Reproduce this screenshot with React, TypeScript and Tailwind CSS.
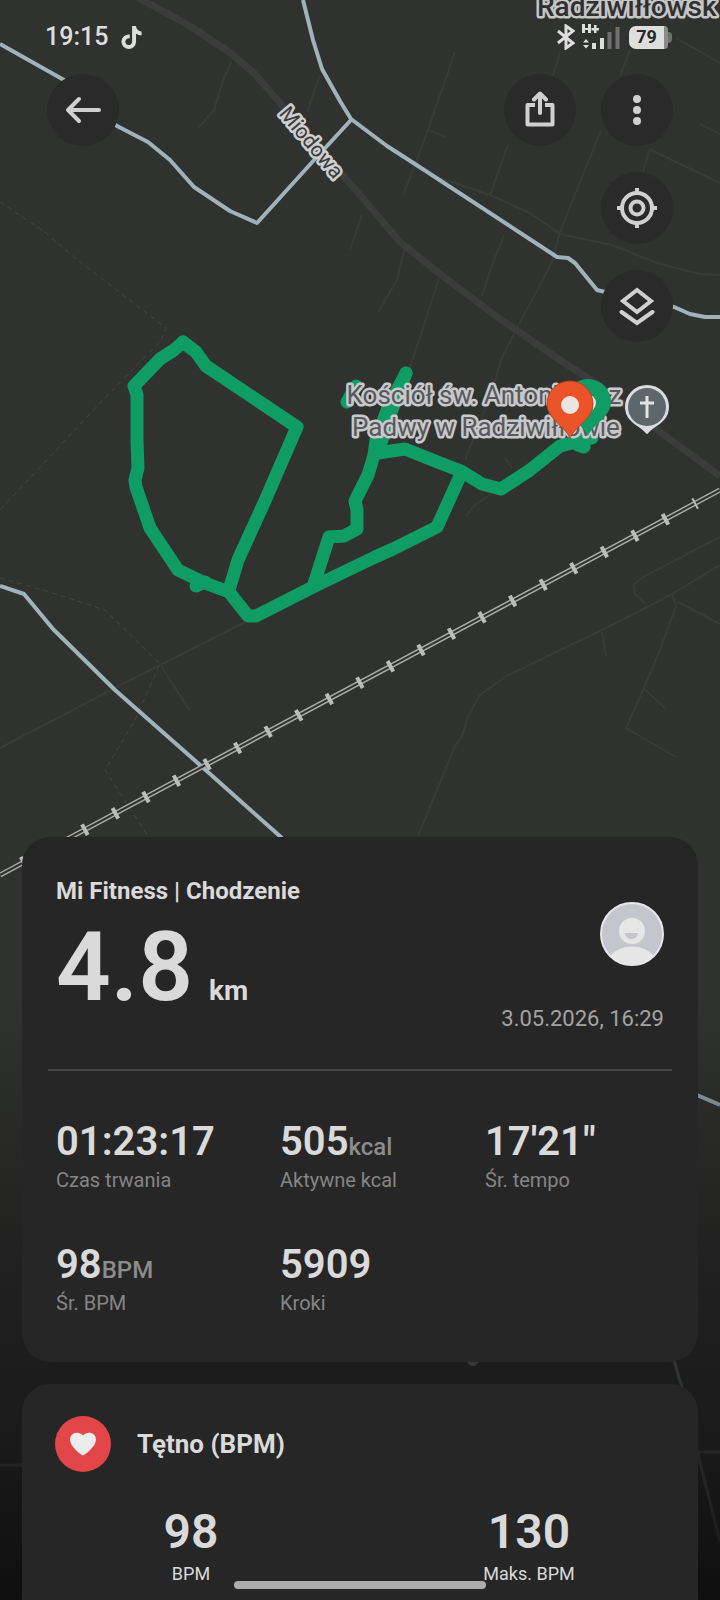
import type { ReactNode } from 'react';
import { FaTiktok } from 'react-icons/fa6';

type Stat = { label: string; value: string; unit?: string };

const stats: Stat[] = [
  { label: 'Czas trwania', value: '01:23:17' },
  { label: 'Aktywne kcal', value: '505', unit: 'kcal' },
  { label: 'Śr. tempo', value: '17\'21"' },
  { label: 'Śr. BPM', value: '98', unit: 'BPM' },
  { label: 'Kroki', value: '5909' },
];

const heartRate: Stat[] = [
  { label: 'BPM', value: '98' },
  { label: 'Maks. BPM', value: '130' },
];

const sideRoads = [
  'M231 62L224 78L214 110L199 127',
  'M320 75L307 112',
  'M455 52L428 130L415 165L403 195M428 130L446 137',
  'M560 52L553 76M508 145L490 195',
  'M630 50L620 76M601 130L560 232L552 262L503 355L485 410L465 460',
  'M415 165L440 178L490 195L530 213L560 234L612 245L660 264L700 274L720 275',
  'M362 215L350 250',
  'M405 247L397 280L378 312',
  'M504 235L492 265L482 296',
  'M440 275L425 322L409 370',
  'M676 38L720 63M700 124L720 134M649 149L720 183M649 151L643 172',
  'M505 458L512 468M491 494L475 505L466 516',
  'M0 748L115 688L245 622',
  'M160 664L190 711',
  'M720 565L672 594L645 608L602 630L560 650L505 677L480 695L468 716L462 736L455 746L418 836',
  'M720 537L645 576L634 584L635 594L645 603',
  'M602 632L606 656',
  'M672 594L676 606L660 650L643 690L626 728L676 757M643 688L665 708M678 602L720 624',
];

const dashedPaths = [
  'M0 202L45 232L75 258L166 328L160 342L100 403L0 510',
  'M0 578L50 592L105 610L160 664L135 720L105 770L148 836',
];

const rivers = [
  'M0 44L64 80L117 126L148 142L170 160L194 187L230 211L257 223L315 159L351 120',
  'M303 0L313 40L322 69L340 101L351 119L387 146L415 164L557 257L568 258L575 263L597 290L637 300L674 307L690 314L705 317H720',
  'M0 586L24 594L53 629L115 690L200 765L282 838',
  'M690 1092L720 1105',
];

const track = [
  'M183 342L196 352L206 366L297 427L264 503L238 560L229 590',
  'M183 342L174 350L160 359L134 386L137 395V440L138 468L135 480L136 487L150 528L178 570L205 583L229 592L248 616H256L315 586L375 557L393 549L437 527L461 474',
  'M196 586L205 582',
  'M314 584L329 537L344 536L357 529V510L355 501L368 475L374 455L376 440L388 408L406 373',
  'M380 446L392 410L406 373',
  'M356 386L347 402',
  'M378 453L405 449L440 463L461 471L482 484L501 489L530 470L560 446L592 438M578 445L584 447',
];

const PIN = 'M0 33C-5 21 -23 14 -23 -1A23 23 0 1 1 23 -1C23 14 5 21 0 33Z';

function RouteMap() {
  return (
    <svg viewBox="0 0 720 1600" className="absolute inset-x-0 top-0 w-full" role="img" aria-label="Mapa trasy">
      <defs>
        <linearGradient id="fade" x1="0" y1="0" x2="0" y2="1">
          <stop offset="0" stopColor="#181818" stopOpacity="0" />
          <stop offset="0.25" stopColor="#1a1a18" stopOpacity="0.4" />
          <stop offset="0.45" stopColor="#1a1a1a" stopOpacity="0.75" />
          <stop offset="0.7" stopColor="#171717" stopOpacity="0.86" />
          <stop offset="1" stopColor="#0d0d0d" stopOpacity="0.95" />
        </linearGradient>
      </defs>
      <rect width="720" height="1600" fill="#303230" />

      <g fill="none" strokeLinejoin="round">
        <g stroke="#3a3b39" strokeWidth="2">
          {sideRoads.map((d) => <path key={d} d={d} />)}
        </g>
        <g stroke="#454643" strokeWidth="1" strokeDasharray="5 4">
          {dashedPaths.map((d) => <path key={d} d={d} />)}
        </g>
        <path
          d="M135 -4L190 26L232 54L255 74L280 103L345 178L360 195L400 242L440 274L500 319L560 360L600 386L660 432L720 476"
          stroke="#3d3c3d"
          strokeWidth="7"
        />
        <g stroke="#a0b3ba" strokeWidth="4">
          {rivers.map((d) => <path key={d} d={d} />)}
        </g>
        <path d="M674 1360L682 1388L698 1454L720 1542" stroke="#a0b3ba" strokeWidth="3" />
        <path d="M0 1465H24M698 1452H720" stroke="#999" strokeWidth="3" />
        <path d="M469 1361Q473 1367 477 1361" stroke="#c6c6c6" strokeWidth="4" />

        {/* railway: two rails with sleepers */}
        <path d="M720 490L0 875" stroke="#a9aaa8" strokeWidth="5" />
        <path d="M720 490L0 875" stroke="#303230" strokeWidth="2" />
        <path d="M696 503L0 875" stroke="#bcbdbb" strokeWidth="12" strokeDasharray="4 30.65" strokeDashoffset="2" />

        <g stroke="#109c65" strokeWidth="13" strokeLinecap="round">
          {track.map((d) => <path key={d} d={d} />)}
        </g>
      </g>

      <g
        fontFamily="Roboto, sans-serif"
        strokeLinejoin="round"
        textAnchor="middle"
        className="[paint-order:stroke]"
      >
        <g fontSize="26" fill="#57595c" stroke="#c9c9cc" strokeWidth="5">
          <text x="484" y="404">Kościół św. Antoniego z</text>
          <text x="486" y="436">Padwy w Radziwiłłowie</text>
        </g>
        <text x="537" y="16" fontSize="28" fontWeight="500" fill="#2f3031" stroke="#c6c6c6" strokeWidth="5" textAnchor="start">
          Radziwiłłowsk
        </text>
        <text transform="translate(306 147) rotate(50)" fontSize="21" fill="#3a3a3b" stroke="#cfcfcf" strokeWidth="5">
          Miodowa
        </text>
      </g>

      <g>
        <path d={PIN} transform="translate(588 403)" fill="#109c65" />
        <circle cx="587" cy="403" r="9" fill="#ebe4e0" />
        <path d={PIN} transform="translate(570 405)" fill="#ea5428" stroke="#b8431f" strokeWidth="1" />
        <circle cx="570" cy="405" r="9" fill="#ebe4e0" />
        <path
          d="M647 433C641 425 626 422 626 407A21 21 0 1 1 668 407C668 422 653 425 647 433Z"
          fill="#dcdcdf"
          stroke="#dcdcdf"
          strokeWidth="2"
          strokeLinejoin="round"
        />
        <circle cx="647" cy="407" r="19" fill="#5d666a" />
        <path d="M647 396V418M640 403H654" stroke="#e3e3e5" strokeWidth="3" />
      </g>

      <rect y="1000" width="720" height="600" fill="url(#fade)" />
    </svg>
  );
}

function RoundButton({ label, children }: { label: string; children: ReactNode }) {
  return (
    <button
      type="button"
      aria-label={label}
      className="flex size-[72px] items-center justify-center rounded-full bg-[#2a2a2a] text-[#d0d0d0]"
    >
      {children}
    </button>
  );
}

function StatusBar() {
  return (
    <div className="flex h-[74px] items-center justify-between pr-[48px] pl-[45px] text-[#dedede]">
      <div className="flex items-center gap-3">
        <span className="text-[25px] leading-8 font-medium">19:15</span>
        <FaTiktok className="size-[23px]" />
      </div>
      <div className="flex items-center gap-[7px]">
        <svg viewBox="0 0 18 26" className="h-[26px] w-[18px]" fill="none" stroke="currentColor" strokeWidth="3">
          <path d="M1 7L16 19L9 24V2L16 7L1 19" />
        </svg>
        <svg viewBox="0 0 38 26" className="h-[26px] w-[38px]" fill="currentColor">
          <path d="M0 0H3V4H6V0H9V9H6V6H3V9H0ZM12 1H14.500V4H17V6.500H14.500V9H12V6.500H9.500V4H12Z" />
          <path d="M1 18.500L4 15L7 18.500ZM1 21L4 24.500L7 21Z" />
          <path d="M10 19H14V25H10ZM18 14H22V25H18Z" />
          <path d="M25.500 8H29.500V25H25.500ZM33.500 3H37.500V25H33.500Z" fill="#6f6f6f" />
        </svg>
        <div className="ml-[2px] flex items-center">
          <span className="flex h-[23px] w-[39px] items-center justify-center rounded-l-[7px] rounded-r-[4px] border-r-4 border-[#8a8a8a] bg-[#dedede] text-[18px] leading-5 font-bold text-[#262726]">
            79
          </span>
          <span className="h-[11px] w-[4px] rounded-r-full bg-[#707070]" />
        </div>
      </div>
    </div>
  );
}

function Toolbar() {
  return (
    <div className="flex items-start justify-between px-[47px]">
      <RoundButton label="Wstecz">
        <svg viewBox="0 0 36 28" className="h-7 w-9" fill="none" stroke="currentColor" strokeWidth="4" strokeLinecap="round" strokeLinejoin="round">
          <path d="M34 14H3M14 3L3 14L14 25" />
        </svg>
      </RoundButton>
      <div className="flex flex-col items-end gap-[26px]">
        <div className="flex gap-[25px]">
          <RoundButton label="Udostępnij">
            <svg viewBox="0 0 32 38" className="h-[38px] w-8" fill="none" stroke="currentColor" strokeWidth="4" strokeLinejoin="round">
              <path d="M11 14H3.500V33.500H28.500V14H21" />
              <path d="M16 22V3M10 8.500L16 2.500L22 8.500" strokeLinecap="round" />
            </svg>
          </RoundButton>
          <RoundButton label="Więcej">
            <svg viewBox="0 0 10 32" className="h-8 w-[10px]" fill="currentColor">
              <circle cx="5" cy="5" r="4" />
              <circle cx="5" cy="16" r="4" />
              <circle cx="5" cy="27" r="4" />
            </svg>
          </RoundButton>
        </div>
        <RoundButton label="Moja lokalizacja">
          <svg viewBox="0 0 40 40" className="size-10" fill="none" stroke="currentColor" strokeWidth="4">
            <circle cx="20" cy="20" r="15" />
            <circle cx="20" cy="20" r="6.500" />
            <path d="M20 0V5M20 35V40M0 20H5M35 20H40" />
          </svg>
        </RoundButton>
        <RoundButton label="Warstwy">
          <svg viewBox="0 0 36 40" className="h-10 w-9" fill="none" stroke="currentColor" strokeWidth="4">
            <path d="M18 4L32 15L18 26L4 15Z" />
            <path d="M2.500 26L18 37L33.500 26" strokeLinecap="round" />
          </svg>
        </RoundButton>
      </div>
    </div>
  );
}

function Avatar() {
  return (
    <svg viewBox="0 0 64 64" className="size-16" role="img" aria-label="Profil">
      <clipPath id="avatar">
        <circle cx="32" cy="32" r="31" />
      </clipPath>
      <circle cx="32" cy="32" r="31" fill="#c5c5cd" />
      <g clipPath="url(#avatar)" fill="#e6e6e6">
        <circle cx="32" cy="29" r="13" />
        <path d="M8 58C16 40 48 40 56 58V64H8Z" />
      </g>
      <path d="M25 31H38C37 39 26 39 25 31Z" fill="#c5c5cd" />
      <circle cx="32" cy="32" r="31" fill="none" stroke="#e8e8ea" strokeWidth="2" />
    </svg>
  );
}

export default function App() {
  return (
    <div className="relative flex min-h-screen flex-col overflow-hidden bg-[#0f0f0f] font-[Roboto,sans-serif] text-[#dadada]">
      <RouteMap />

      <header className="relative">
        <StatusBar />
        <Toolbar />
      </header>

      <main className="relative mt-[495px] flex flex-1 flex-col gap-[22px] px-[22px]">
        <section className="rounded-[28px] bg-[#262626] px-[26px] pt-[38px] pb-[45px]">
          <div className="flex justify-between px-2">
            <div>
              <h1 className="text-[24px] leading-8 font-bold">Mi Fitness | Chodzenie</h1>
              <p className="mt-3 flex items-baseline gap-4">
                <span className="text-[96px] leading-[96px] font-semibold">4.8</span>
                <span className="text-[28px] font-bold">km</span>
              </p>
            </div>
            <div className="flex flex-col items-end pt-[27px]">
              <Avatar />
              <time className="mt-[37px] text-[22px] leading-8 text-[#a3a3a3]">3.05.2026, 16:29</time>
            </div>
          </div>

          <hr className="mt-[34px] border-t-2 border-[#454545]" />

          <dl className="mt-[47px] grid grid-cols-[224fr_205fr_179fr] gap-y-[47px] px-2">
            {stats.map((s) => (
              <div key={s.label} className="flex flex-col-reverse">
                <dt className="text-[20px] leading-7 text-[#858585]">{s.label}</dt>
                <dd className="text-[40px] leading-[48px] font-semibold">
                  {s.value}
                  {s.unit ? <span className="text-[24px] leading-6 font-medium text-[#8c8c8c]">{s.unit}</span> : null}
                </dd>
              </div>
            ))}
          </dl>
        </section>

        <section className="flex-1 rounded-t-[28px] bg-[#262626] pt-8 pb-3">
          <div className="flex items-center gap-[26px] px-[33px]">
            <span className="flex size-14 items-center justify-center rounded-full bg-[#e24648]">
              <svg viewBox="0 0 26 24" className="h-6 w-[26px]" fill="#ececec">
                <path d="M13 23.500C12 23.500 0 15 0 7.500C0 1 8.500 -1.500 13 3.500C17.500 -1.500 26 1 26 7.500C26 15 14 23.500 13 23.500Z" />
              </svg>
            </span>
            <h2 className="text-[26px] leading-8 font-bold">Tętno (BPM)</h2>
          </div>
          <dl className="mt-8 grid grid-cols-2 text-center">
            {heartRate.map((s) => (
              <div key={s.label} className="flex flex-col-reverse">
                <dt className="text-[18px] leading-7">{s.label}</dt>
                <dd className="text-[48px] leading-[56px] font-semibold">{s.value}</dd>
              </div>
            ))}
          </dl>
        </section>
      </main>

      <div className="absolute bottom-[11px] left-1/2 h-2 w-[252px] -translate-x-1/2 rounded-full bg-[#acacac]" />
    </div>
  );
}
